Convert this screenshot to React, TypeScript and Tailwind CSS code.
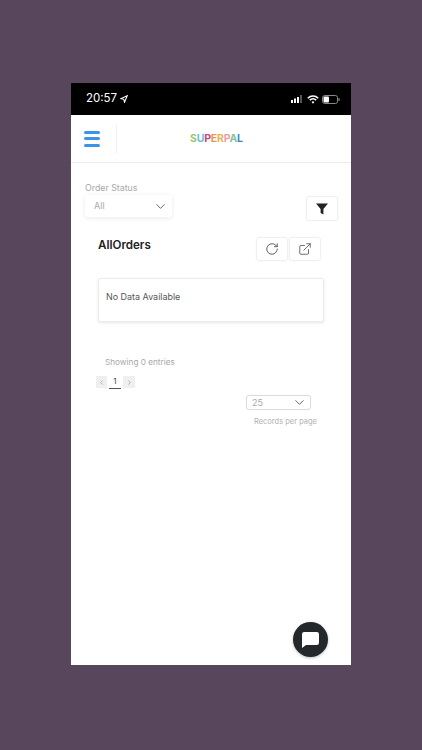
import { ChevronDown, RotateCw, ExternalLink, ChevronLeft, ChevronRight } from "lucide-react";

export default function App() {
  return (
    <div className="w-[422px] h-[750px] bg-[#58465c] flex justify-center pt-[83px] font-['Inter',sans-serif] overflow-hidden">
      <div className="relative w-[280px] h-[582px] bg-white flex flex-col">
        {/* status bar */}
        <div className="h-[32px] bg-black flex items-center justify-between pl-[15px] pr-[11px] text-white">
          <div className="flex items-center gap-[3px]">
            <span className="text-[11.5px] leading-none">20:57</span>
            <svg width="8" height="8" viewBox="0 0 10 10" fill="none" stroke="white" strokeWidth="1.3"><path d="M9 1 1 4.6l3.8.8.8 3.8z" /></svg>
          </div>
          <div className="flex items-center gap-[3px]">
            <svg width="13" height="8" viewBox="0 0 13 8">
              <rect x="0" y="5" width="2" height="3" fill="#fff" />
              <rect x="3" y="3.5" width="2" height="4.5" fill="#fff" />
              <rect x="6" y="2" width="2" height="6" fill="#fff" />
              <rect x="9" y="0" width="2" height="8" fill="#555" />
            </svg>
            <svg width="12" height="9" viewBox="0 0 12 9" fill="none" stroke="white" strokeWidth="1.6">
              <path d="M.8 3.2a7.4 7.4 0 0 1 10.4 0" />
              <path d="M2.8 5.1a4.6 4.6 0 0 1 6.4 0" />
              <path d="M6 8.8 4.6 7a2 2 0 0 1 2.8 0z" fill="white" stroke="none" />
            </svg>
            <svg width="18" height="9" viewBox="0 0 18 9">
              <rect x="0.5" y="0.5" width="15" height="8" rx="2.2" fill="none" stroke="#888" />
              <rect x="1.5" y="1.5" width="5.5" height="6" rx="1" fill="#fff" />
              <rect x="16.4" y="3" width="1.2" height="3" rx="0.6" fill="#888" />
            </svg>
          </div>
        </div>

        {/* header */}
        <div className="h-[48px] border-b border-[#ececec] flex items-center">
          <div className="w-[46px] h-[28px] border-r border-[#f0f0f0] flex items-center pl-[13px]">
            <div className="w-[16px] flex flex-col gap-[3.5px]">
              <div className="h-[3px] rounded-full bg-[#3a94e8]" />
              <div className="h-[3px] rounded-full bg-[#3a94e8]" />
              <div className="h-[3px] rounded-full bg-[#3a94e8]" />
            </div>
          </div>
          <div className="ml-[73px] mt-[2px] text-[10.5px] font-bold leading-none tracking-[-0.2px]">
            <span className="text-[#9cc46a]">S</span>
            <span className="text-[#6bc0d8]">U</span>
            <span className="text-[#c2477f]">P</span>
            <span className="text-[#ef8f63]">E</span>
            <span className="text-[#e8b34e]">R</span>
            <span className="text-[#ef9aa8]">P</span>
            <span className="text-[#7fc4a0]">A</span>
            <span className="text-[#3f86c0]">L</span>
          </div>
        </div>

        {/* filter */}
        <div className="flex justify-between pl-[14px] pr-[13px] mt-[18px]">
          <div>
            <div className="text-[8.8px] leading-[13px] text-[#a8a8a8]">Order Status</div>
            <div className="w-[87px] h-[22px] mt-[1px] rounded-[3px] bg-white shadow-[0_1px_5px_rgba(0,0,0,0.09)] flex items-center justify-between pl-[9px] pr-[4px]">
              <span className="text-[9px] text-[#a8a8a8]">All</span>
              <ChevronDown size={15} strokeWidth={1.6} className="text-[#666]" />
            </div>
          </div>
          <div className="w-[32px] h-[25px] mt-[15px] rounded-[3px] border border-[#f0f0f0] bg-white shadow-[0_0_2px_rgba(0,0,0,0.05)] flex items-center justify-center">
            <svg width="12" height="12" viewBox="0 0 12 12" fill="#222"><path d="M0 .6h12L7.4 6v5.4L4.6 10V6z" /></svg>
          </div>
        </div>

        {/* title row */}
        <div className="flex justify-between items-start pl-[27px] pr-[30px] mt-[16px]">
          <div className="text-[11.6px] leading-[16px] font-semibold text-[#222]">AllOrders</div>
          <div className="flex gap-[1px]">
            <div className="w-[32px] h-[24px] rounded-[3px] border border-[#f0f0f0] shadow-[0_0_2px_rgba(0,0,0,0.05)] flex items-center justify-center">
              <RotateCw size={14} strokeWidth={1.3} className="text-[#333]" />
            </div>
            <div className="w-[32px] h-[24px] rounded-[3px] border border-[#f0f0f0] shadow-[0_0_2px_rgba(0,0,0,0.05)] flex items-center justify-center">
              <ExternalLink size={14} strokeWidth={1.3} className="text-[#444]" />
            </div>
          </div>
        </div>

        {/* no data */}
        <div className="ml-[27px] w-[226px] h-[44px] mt-[17px] rounded-[2px] border border-[#ececec] shadow-[0_1px_3px_rgba(0,0,0,0.1)] pl-[7px] pt-[11px] text-[8.95px] leading-[13px] text-[#555]">
          No Data Available
        </div>

        {/* pagination */}
        <div className="ml-[34px] mt-[34px] text-[8.2px] leading-[12px] text-[#a8a8a8]">Showing 0 entries</div>
        <div className="flex items-start ml-[25px] mt-[8px] h-[13px]">
          <div className="w-[11px] h-[12px] bg-[#efefef] flex items-center justify-center">
            <ChevronLeft size={7} strokeWidth={3} className="text-[#aaa]" />
          </div>
          <div className="w-[12px] h-[13px] ml-[2px] border-b border-[#555] text-[8px] leading-[11px] text-center text-[#444]">1</div>
          <div className="w-[12px] h-[12px] ml-[2px] bg-[#efefef] flex items-center justify-center">
            <ChevronRight size={7} strokeWidth={3} className="text-[#aaa]" />
          </div>
        </div>
        <div className="ml-[175px] mt-[6px] w-[65px] h-[15px] rounded-[3px] border border-[#dcdcdc] shadow-[0_0_2px_rgba(0,0,0,0.06)] flex items-center justify-between pl-[5px] pr-[3px]">
          <span className="text-[9px] text-[#a8a8a8]">25</span>
          <ChevronDown size={15} strokeWidth={1.6} className="text-[#666]" />
        </div>
        <div className="ml-[183px] mt-[8px] text-[7.5px] leading-[8px] text-[#b0b0b0]">Records per page</div>

        {/* chat */}
        <div className="absolute left-[222px] top-[539px] w-[35px] h-[35px] rounded-full bg-[#23282b] shadow-[0_1px_3px_rgba(0,0,0,0.25)] flex items-center justify-center">
          <svg width="17" height="16" viewBox="0 0 17 16" fill="white"><path d="M2.2 0h12.6A2.2 2.2 0 0 1 17 2.2v8.6a2.2 2.2 0 0 1-2.2 2.2H4L0 16V2.2A2.2 2.2 0 0 1 2.2 0z" /></svg>
        </div>
      </div>
    </div>
  );
}
